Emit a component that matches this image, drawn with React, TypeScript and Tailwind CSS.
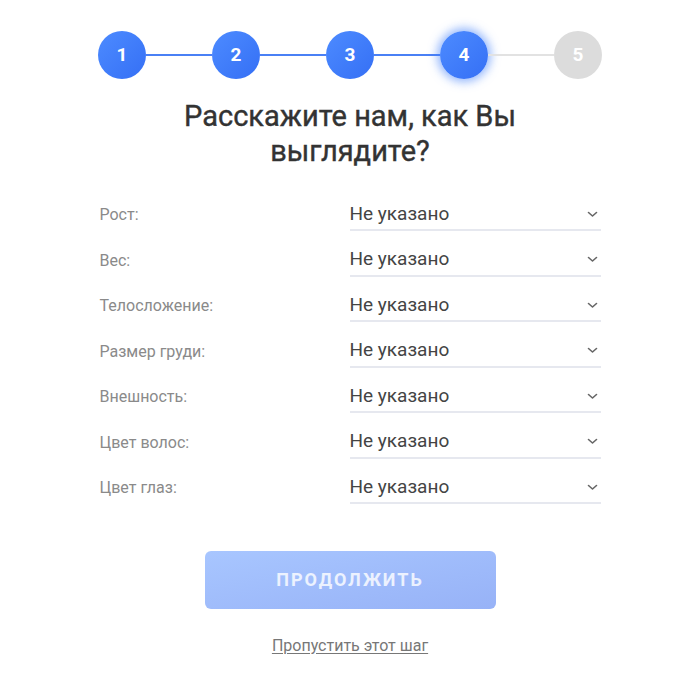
import React from "react";

const fields = [
  "Рост:",
  "Вес:",
  "Телосложение:",
  "Размер груди:",
  "Внешность:",
  "Цвет волос:",
  "Цвет глаз:",
];

function Step({ n, state }: { n: number; state: "done" | "active" | "todo" }) {
  const base =
    "w-[48px] h-[48px] rounded-full flex items-center justify-center text-[19px] font-bold text-white shrink-0";
  if (state === "todo") {
    return <div className={base + " bg-[#dcdcdc]"}>{n}</div>;
  }
  return (
    <div
      className={
        base +
        " bg-gradient-to-br from-[#4d8bff] to-[#356ff5] " +
        (state === "active" ? "shadow-[0_0_10px_3px_rgba(61,123,250,0.55)]" : "")
      }
    >
      {n}
    </div>
  );
}

function Line({ active }: { active: boolean }) {
  return <div className={"flex-1 h-[2px] " + (active ? "bg-[#4a80f5]" : "bg-[#e2e2e2]")} />;
}

export default function App() {
  return (
    <div
      className="w-[700px] h-[687px] bg-white flex flex-col items-center"
      style={{ fontFamily: "Roboto, 'Noto Sans', sans-serif" }}
    >
      <div className="w-[504px] flex items-center mt-[31px]">
        <Step n={1} state="done" />
        <Line active />
        <Step n={2} state="done" />
        <Line active />
        <Step n={3} state="done" />
        <Line active />
        <Step n={4} state="active" />
        <Line active={false} />
        <Step n={5} state="todo" />
      </div>

      <h1 className="mt-[20px] text-[29px] leading-[35px] font-normal text-[#333] text-center w-[400px] [-webkit-text-stroke:0.4px_#333]">
        Расскажите нам, как Вы выглядите?
      </h1>

      <div className="w-[501px] mt-[30px] flex flex-col">
        {fields.map((f) => (
          <div key={f} className="grid grid-cols-[250px_1fr] h-[45.5px]">
            <div className="text-[16px] text-[#8a8a8a] h-[32px] flex items-center">{f}</div>
            <div className="h-[32px] border-b-2 border-[#e6e8ef] flex items-center justify-between pr-[3px]">
              <span className="text-[19px] text-[#444]">Не указано</span>
              <svg width="11" height="7" viewBox="0 0 11 7" fill="none">
                <polyline
                  points="1.5,1.5 5.5,5 9.5,1.5"
                  stroke="#666"
                  strokeWidth="1.6"
                  strokeLinecap="round"
                  strokeLinejoin="round"
                />
              </svg>
            </div>
          </div>
        ))}
      </div>

      <button className="mt-[33px] w-[291px] h-[58px] rounded-[6px] bg-gradient-to-br from-[#a8c6ff] to-[#97b2f7] text-white/80 text-[18px] font-bold tracking-[2px]">
        ПРОДОЛЖИТЬ
      </button>

      <a className="mt-[25px] text-[16px] text-[#777] underline underline-offset-2 cursor-pointer">
        Пропустить этот шаг
      </a>
    </div>
  );
}
